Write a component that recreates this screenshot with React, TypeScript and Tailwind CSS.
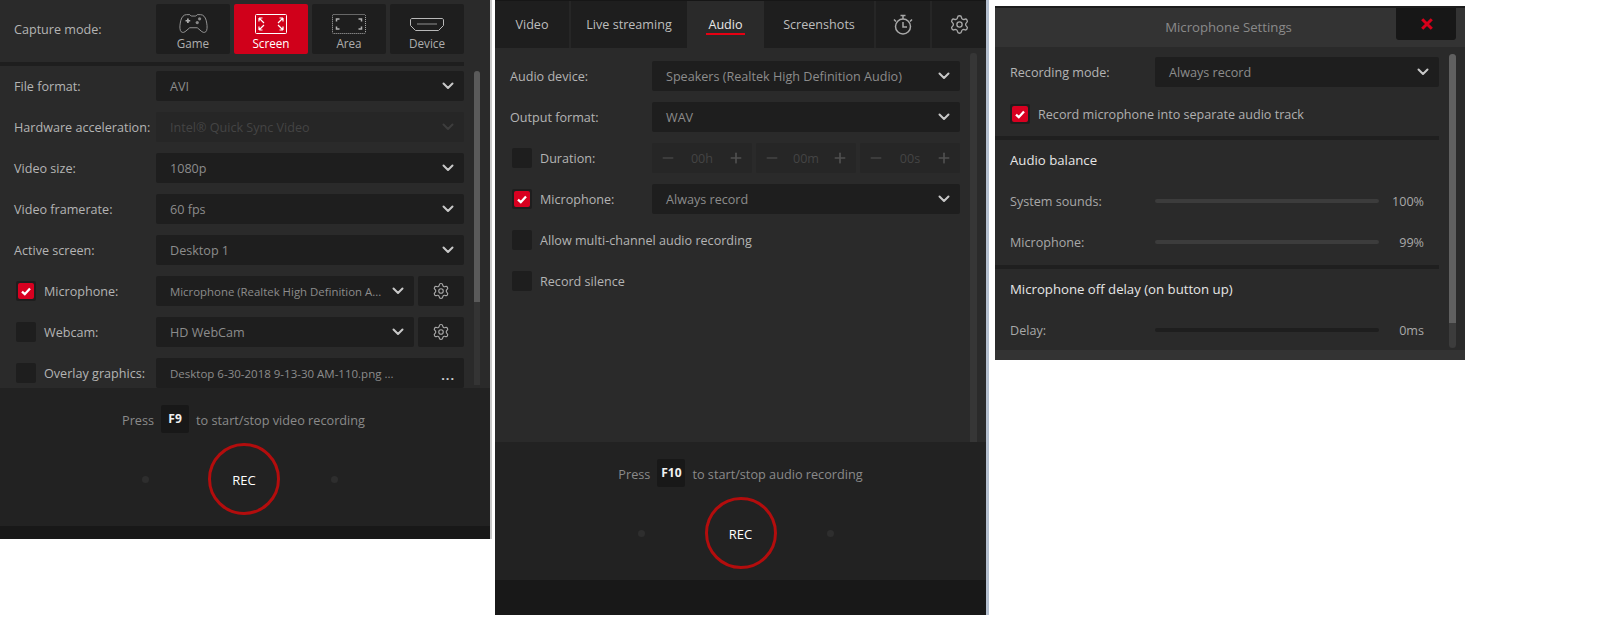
import React from "react";
import { Minus, Plus, Settings } from "lucide-react";

const font = "font-['Open_Sans','Noto_Sans',sans-serif]";

function Chev({ dim }: { dim?: boolean }) {
  return (
    <svg width="12" height="8" viewBox="0 0 12 8" className="shrink-0">
      <path d="M1.5 1.5 6 6l4.5-4.5" fill="none" stroke={dim ? "#3d3d3d" : "#c8c8c8"} strokeWidth="2" strokeLinecap="round" strokeLinejoin="round" />
    </svg>
  );
}

function Select({ value, dim, className = "" }: { value: string; dim?: boolean; className?: string }) {
  return (
    <div className={`flex h-[30px] shrink-0 items-center justify-between rounded-[2px] pl-[14px] pr-[10px] ${dim ? "bg-[#262626] text-[#444444]" : "bg-[#1e1e1e] text-[#8c8c8c]"} ${className}`}>
      <span className="whitespace-nowrap pt-[2px]">{value}</span>
      <Chev dim={dim} />
    </div>
  );
}

function Check({ on }: { on?: boolean }) {
  return (
    <div className="flex h-5 w-5 shrink-0 items-center justify-center rounded-[2px] bg-[#1e1e1e]">
      {on && (
        <div className="flex h-4 w-4 items-center justify-center rounded-[2px] bg-[#d80020]">
          <svg width="10" height="9" viewBox="0 0 10 9">
            <path d="M1 4.600 3.800 7.200 9 1.400" fill="none" stroke="#fff" strokeWidth="2.300" />
          </svg>
        </div>
      )}
    </div>
  );
}

function Row({ label, children }: { label: string; children: React.ReactNode }) {
  return (
    <div className="flex h-[30px] items-center">
      <div className="w-[142px] shrink-0 whitespace-nowrap pt-[2px] text-[#b4b4b4]">{label}</div>
      {children}
    </div>
  );
}

function CheckRow({ label, on, children, w = "w-[120px]" }: { label: string; on?: boolean; children?: React.ReactNode; w?: string }) {
  return (
    <div className="flex h-[30px] items-center pl-[2px]">
      <Check on={on} />
      <div className={`${w} shrink-0 whitespace-nowrap pl-[8px] pt-[2px] text-[#b4b4b4]`}>{label}</div>
      {children}
    </div>
  );
}

function Gear() {
  return (
    <div className="flex h-[30px] w-[46px] shrink-0 items-center justify-center rounded-[2px] bg-[#1e1e1e]">
      <Settings size={18} strokeWidth={1.5} color="#a8a8a8" />
    </div>
  );
}

function Mode({ label, active, children }: { label: string; active?: boolean; children: React.ReactNode }) {
  return (
    <div className={`flex h-[50px] w-[74px] flex-col items-center justify-between rounded-[2px] pb-[3px] pt-[9px] ${active ? "bg-[#d0001a] text-white" : "bg-[#1e1e1e] text-[#aeaeae]"}`}>
      <div className="flex h-[22px] items-center justify-center">{children}</div>
      <span className="text-[11.7px] leading-[16px]">{label}</span>
    </div>
  );
}

function Rec({ circle }: { circle: string }) {
  return (
    <div className="flex items-center justify-center pr-[10px]">
      <div className="h-[7px] w-[7px] rounded-full bg-[#2e2e2e]" />
      <div className={`${circle} flex h-[72px] w-[72px] items-center justify-center rounded-full border-[3px] border-[#b30d0d] pt-[2px] text-[13px] text-white`}>REC</div>
      <div className="h-[7px] w-[7px] rounded-full bg-[#2e2e2e]" />
    </div>
  );
}

function Hint({ k, text, className = "" }: { k: string; text: string; className?: string }) {
  return (
    <div className={`flex h-7 items-center justify-center text-[12.7px] text-[#8a8a8a] ${className}`}>
      <span className="pt-[2px]">Press</span>
      <span className="mx-[7px] flex h-7 w-7 items-center justify-center rounded-[2px] bg-[#181818] text-[12px] font-bold text-[#f0f0f0]">{k}</span>
      <span className="pt-[2px]">{text}</span>
    </div>
  );
}

function Stepper({ v }: { v: string }) {
  return (
    <div className="flex h-[30px] w-[100px] items-center justify-between rounded-[2px] bg-[#262626] px-[8px] text-[#444444]">
      <Minus size={16} strokeWidth={2.5} color="#444444" />
      <span className="pt-[2px]">{v}</span>
      <Plus size={16} strokeWidth={2.5} color="#505050" />
    </div>
  );
}

function Tab({ label, w, active }: { label: string; w: string; active?: boolean }) {
  return (
    <div className={`${w} flex h-[47px] shrink-0 items-center justify-center ${active ? "bg-[#2a2a2a] text-[#e8e8e8]" : "bg-[#1e1e1e] text-[#bdbdbd]"}`}>
      <span className={active ? "border-b-2 border-[#e60012] px-[2.5px] pt-[3px] leading-[16px]" : "pt-[2px]"}>{label}</span>
    </div>
  );
}

function SliderRow({ label, value, dark }: { label: string; value: string; dark?: boolean }) {
  return (
    <div className="flex h-[20px] items-center">
      <div className="w-[145px] shrink-0 whitespace-nowrap pt-[2px] text-[#a8a8a8]">{label}</div>
      <div className={`h-1 w-[224px] rounded-full ${dark ? "bg-[#1e1e1e]" : "bg-[#3c3c3c]"}`} />
      <div className="w-[45px] pt-[2px] text-right text-[#a8a8a8]">{value}</div>
    </div>
  );
}

export default function App() {
  return (
    <div className={`${font} flex h-[628px] w-[1623px] items-start overflow-hidden bg-white text-[12.6px] leading-none`}>
      {/* Panel 1 */}
      <div className="flex h-[539px] w-[490px] shrink-0 flex-col bg-[#2a2a2a]">
        <div className="flex h-[388px] shrink-0 flex-col overflow-hidden">
          <div className="flex h-[62px] shrink-0 items-start pl-[14px] pt-1">
            <div className="flex h-[50px] w-[142px] items-center pt-[2px] text-[#b4b4b4]">Capture mode:</div>
            <div className="flex gap-1">
              <Mode label="Game">
                <svg width="29" height="22" viewBox="0 0 31 23" fill="none" stroke="#9a9a9a" strokeWidth="1">
                  <path d="M8 1.500h3.500l1.500 1.500h5l1.500-1.500H23c3 0 5 2.500 6 6 1 4 1.500 8 .5 11-.7 2-3 2.700-5 1.200L19.500 15.500h-8L6.500 19.700c-2 1.500-4.300.8-5-1.200-1-3-.5-7 .5-11 1-3.500 3-6 6-6z" />
                  <path d="M7 8h5M9.500 5.500v5" strokeWidth="1.800" stroke="#b0b0b0" />
                  <circle cx="22" cy="6" r="1.700" fill="#8a8a8a" stroke="none" />
                  <circle cx="19.500" cy="10" r="1.700" fill="#8a8a8a" stroke="none" />
                </svg>
              </Mode>
              <Mode label="Screen" active>
                <svg width="32" height="20" viewBox="0 0 32 20" fill="none" stroke="#fff">
                  <rect x=".5" y=".5" width="31" height="19" rx="1" />
                  <path d="M4 4l5 5M4 4v3.500M4 4h3.500M28 4l-5 5M28 4v3.500M28 4h-3.500M4 16l5-5M4 16v-3.500M4 16h3.500M28 16l-5-5M28 16v-3.500M28 16h-3.500" strokeWidth="1.200" />
                </svg>
              </Mode>
              <Mode label="Area">
                <svg width="34" height="20" viewBox="0 0 34 20" fill="none" stroke="#b0b0b0">
                  <rect x=".5" y=".5" width="33" height="19" rx="1" strokeDasharray="1 1" />
                  <path d="M4.500 7.500V5h3M29.500 7.500V5h-3M4.500 12.500V15h3M29.500 12.500V15h-3" strokeWidth="1.500" />
                </svg>
              </Mode>
              <Mode label="Device">
                <svg width="34" height="13" viewBox="0 0 34 13" fill="none" stroke="#b8b8b8">
                  <path d="M2 .5h30c.8 0 1.500.7 1.500 1.500v5.500l-5 5h-23l-5-5V2C.5 1.200 1.200.5 2 .5z" />
                  <path d="M7.500 6h19" strokeDasharray="1 1" strokeWidth="1.500" />
                </svg>
              </Mode>
            </div>
          </div>
          <div className="h-1 w-[464px] shrink-0 bg-[#1e1e1e]" />
          <div className="flex min-h-0 flex-1">
            <div className="flex w-[464px] shrink-0 flex-col gap-[11px] overflow-hidden pl-[14px] pt-[5px]">
              <Row label="File format:"><Select value="AVI" className="w-[308px]" /></Row>
              <Row label="Hardware acceleration:"><Select value="Intel® Quick Sync Video" dim className="w-[308px]" /></Row>
              <Row label="Video size:"><Select value="1080p" className="w-[308px]" /></Row>
              <Row label="Video framerate:"><Select value="60 fps" className="w-[308px]" /></Row>
              <Row label="Active screen:"><Select value="Desktop 1" className="w-[308px]" /></Row>
              <CheckRow label="Microphone:" on>
                <Select value="Microphone (Realtek High Definition A..." className="w-[258px] text-[11.4px]" />
                <div className="w-1 shrink-0" />
                <Gear />
              </CheckRow>
              <CheckRow label="Webcam:">
                <Select value="HD WebCam" className="w-[258px]" />
                <div className="w-1 shrink-0" />
                <Gear />
              </CheckRow>
              <CheckRow label="Overlay graphics:">
                <div className="flex h-[30px] w-[308px] shrink-0 items-center justify-between rounded-[2px] bg-[#1e1e1e] pl-[14px] pr-[9px] text-[#8c8c8c]">
                  <span className="whitespace-nowrap pt-[2px] text-[11.5px]">Desktop 6-30-2018 9-13-30 AM-110.png ...</span>
                  <span className="pt-[6px] font-bold tracking-[1px] text-[#d0d0d0]">...</span>
                </div>
              </CheckRow>
            </div>
            <div className="ml-[10px] mt-[5px] flex h-[314px] w-[6px] flex-col overflow-hidden rounded-t-[3px] bg-[#343434]">
              <div className="h-[231px] shrink-0 bg-[#5a5a5a]" />
            </div>
          </div>
        </div>
        <div className="flex h-[138px] shrink-0 flex-col bg-[#222222] pt-[17px]">
          <Hint k="F9" text="to start/stop video recording" className="pr-[3px]" />
          <div className="mt-[10px]"><Rec circle="ml-[59px] mr-[51px]" /></div>
        </div>
        <div className="flex-1 bg-[#181818]" />
      </div>
      <div className="h-[539px] w-[2px] shrink-0 bg-[#c8c8c8]" />
      <div className="w-[3px] shrink-0" />

      {/* Panel 2 */}
      <div className="flex h-[615px] w-[491px] shrink-0 flex-col bg-[#2a2a2a]">
        <div className="flex h-[48px] shrink-0 border-t border-[#161616] bg-[#262626]">
          <Tab label="Video" w="w-[74px]" />
          <div className="w-[2px] shrink-0" />
          <Tab label="Live streaming" w="w-[116px]" />
          <Tab label="Audio" w="w-[77px]" active />
          <Tab label="Screenshots" w="w-[110px]" />
          <div className="w-[2px] shrink-0" />
          <div className="flex h-[47px] w-[54px] shrink-0 items-center justify-center bg-[#1e1e1e]">
            <svg width="22" height="22" viewBox="0 0 22 22" fill="none" stroke="#a8a8a8" strokeWidth="1.500">
              <circle cx="11" cy="12.500" r="7.500" />
              <path d="M11 8v5h4M8.500 1.500h5M11 1.500V5M2 5.500l2 2M20 5.500l-2 2" />
            </svg>
          </div>
          <div className="w-[2px] shrink-0" />
          <div className="flex h-[47px] w-[54px] shrink-0 items-center justify-center bg-[#1e1e1e]">
            <Settings size={21} strokeWidth={1.5} color="#a8a8a8" />
          </div>
        </div>
        <div className="flex h-[394px] shrink-0">
          <div className="flex w-[465px] shrink-0 flex-col gap-[11px] pl-[15px] pt-[13px]">
            <Row label="Audio device:"><Select value="Speakers (Realtek High Definition Audio)" className="w-[308px]" /></Row>
            <Row label="Output format:"><Select value="WAV" className="w-[308px]" /></Row>
            <CheckRow label="Duration:">
              <div className="flex gap-1">
                <Stepper v="00h" />
                <Stepper v="00m" />
                <Stepper v="00s" />
              </div>
            </CheckRow>
            <CheckRow label="Microphone:" on><Select value="Always record" className="w-[308px]" /></CheckRow>
            <CheckRow label="Allow multi-channel audio recording" w="w-auto" />
            <CheckRow label="Record silence" w="w-auto" />
          </div>
          <div className="ml-[10px] mt-[5px] w-[7px] rounded-t-[3px] bg-[#363636]" />
        </div>
        <div className="flex h-[138px] shrink-0 flex-col bg-[#222222] pt-[17px]">
          <Hint k="F10" text="to start/stop audio recording" />
          <div className="mt-[10px]"><Rec circle="ml-[60px] mr-[50px]" /></div>
        </div>
        <div className="flex-1 bg-[#181818]" />
      </div>
      <div className="h-[615px] w-[3px] shrink-0 bg-[#b4bfcf]" />
      <div className="w-[6px] shrink-0" />

      {/* Panel 3 */}
      <div className="mt-[6px] flex h-[354px] w-[470px] shrink-0 flex-col bg-[#2a2a2a]">
        <div className="relative flex h-[41px] shrink-0 items-center justify-center border-t-2 border-[#1c1c1c] bg-[#333333] pr-[3px] text-[13.2px] text-[#8a8a8a]">
          Microphone Settings
          <div className="absolute right-[9px] top-0 flex h-[32px] w-[60px] items-center justify-center rounded-b-[3px] bg-[#171717] pl-[1px]">
            <svg width="12" height="12" viewBox="0 0 12 12">
              <path d="M1.200 1.200l9.600 9.600M10.800 1.200l-9.600 9.600" stroke="#d8001a" strokeWidth="3" />
            </svg>
          </div>
        </div>
        <div className="flex min-h-0 flex-1">
          <div className="flex w-[444px] shrink-0 flex-col">
            <div className="flex items-center pl-[15px] pt-[10px]">
              <div className="w-[145px] shrink-0 pt-[2px] text-[#b4b4b4]">Recording mode:</div>
              <Select value="Always record" className="w-[284px]" />
            </div>
            <div className="mt-[17px] flex items-center gap-[8px] pl-[15px]">
              <Check on />
              <span className="pt-[2px] text-[#b0b0b0]">Record microphone into separate audio track</span>
            </div>
            <div className="mt-[12px] h-1 w-full bg-[#1f1f1f]" />
            <div className="box-content h-[13px] pl-[15px] pt-[14px] text-[13.2px] text-[#e6e6e6]">Audio balance</div>
            <div className="flex flex-col gap-[21px] pl-[15px] pt-[24px]">
              <SliderRow label="System sounds:" value="100%" />
              <SliderRow label="Microphone:" value="99%" />
            </div>
            <div className="mt-[13px] h-1 w-full bg-[#1f1f1f]" />
            <div className="box-content h-[13px] pl-[15px] pt-[14px] text-[13.2px] text-[#e6e6e6]">Microphone off delay (on button up)</div>
            <div className="pl-[15px] pt-[24px]">
              <SliderRow label="Delay:" value="0ms" dark />
            </div>
          </div>
          <div className="ml-[10px] mt-[7px] flex h-[294px] w-[7px] flex-col overflow-hidden rounded-full bg-[#3c3c3c]">
            <div className="h-[269px] shrink-0 bg-[#606060]" />
          </div>
        </div>
        <div className="h-[10px] shrink-0 bg-[#333333]" />
      </div>
    </div>
  );
}
